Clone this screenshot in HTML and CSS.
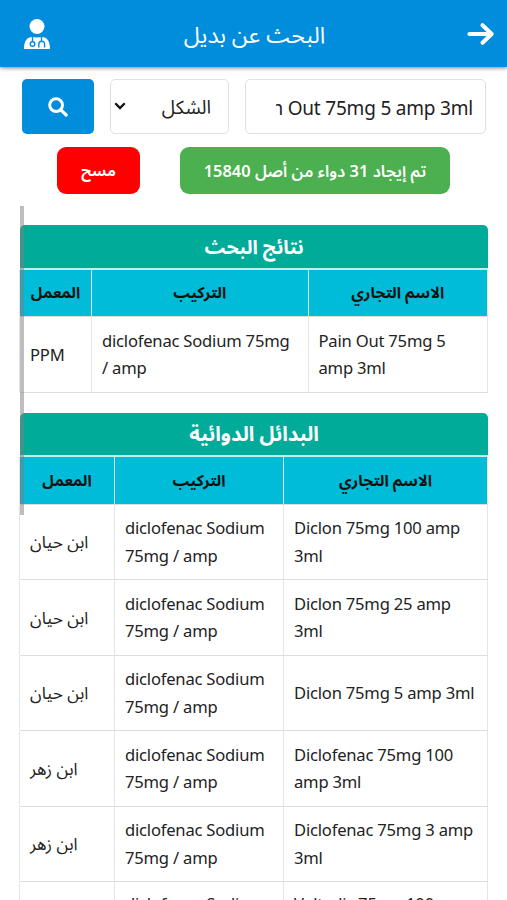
FILE: index.html
```html
<!DOCTYPE html>
<html lang="ar" dir="rtl">
<head>
<meta charset="utf-8">
<title>البحث عن بديل</title>
<link rel="stylesheet" href="styles.css">
</head>
<body>
<header class="topbar">
  <svg class="back" viewBox="0 0 28 24"><path d="M2.4 12H24M15.5 3.2L24.7 12L15.5 20.8" fill="none" stroke="#fff" stroke-width="4" stroke-linecap="round" stroke-linejoin="round"/></svg>
  <h1 class="title">البحث عن بديل</h1>
  <svg class="doctor" viewBox="0 0 26 30"><circle cx="13" cy="7.5" r="7.5" fill="#fff"/><path d="M0 30C0 22 3 18.2 8 18L13 18.5L18 18C23 18.2 26 22 26 30Z" fill="#fff"/><g fill="none" stroke="#008ddc" stroke-width="1.4"><path d="M8.5 18V22.5M17.5 18V22M15.6 27.7H14.8V25.5Q14.8 22.2 17.7 22.2T20.6 25.5V27.7H19.8"/><circle cx="8.5" cy="25" r="2.3"/></g></svg>
</header>
<section class="search">
  <div class="query" dir="ltr"><span class="query-text">Pain Out 75mg 5 amp 3ml</span></div>
  <div class="select"><span>الشكل</span><svg class="chevron" viewBox="0 0 12 8"><path d="M1.3 1.3L6 6L10.7 1.3" fill="none" stroke="#111" stroke-width="2.3"/></svg></div>
  <button class="go" aria-label="بحث"><svg class="lens" viewBox="0 0 20 20"><circle cx="8.1" cy="8.1" r="6.4" fill="none" stroke="#fff" stroke-width="3"/><path d="M12.8 12.8L18.2 18" stroke="#fff" stroke-width="3.2" stroke-linecap="round"/></svg></button>
</section>
<section class="status">
  <div class="count">تم إيجاد 31 دواء من أصل 15840</div>
  <button class="clear">مسح</button>
</section>
<main class="results">
  <div class="thumb"></div>
  <section class="table found">
    <h2 class="caption">نتائج البحث</h2>
    <div class="row head"><div>الاسم التجاري</div><div>التركيب</div><div>المعمل</div></div>
    <div class="row"><div dir="ltr">Pain Out 75mg 5<br>amp 3ml</div><div dir="ltr">diclofenac Sodium 75mg<br>/ amp</div><div dir="ltr">PPM</div></div>
  </section>
  <section class="table alternatives">
    <h2 class="caption">البدائل الدوائية</h2>
    <div class="row head"><div>الاسم التجاري</div><div>التركيب</div><div>المعمل</div></div>
    <div class="row"><div dir="ltr">Diclon 75mg 100 amp<br>3ml</div><div dir="ltr">diclofenac Sodium<br>75mg / amp</div><div class="lab">ابن حيان</div></div>
    <div class="row"><div dir="ltr">Diclon 75mg 25 amp<br>3ml</div><div dir="ltr">diclofenac Sodium<br>75mg / amp</div><div class="lab">ابن حيان</div></div>
    <div class="row"><div dir="ltr">Diclon 75mg 5 amp 3ml</div><div dir="ltr">diclofenac Sodium<br>75mg / amp</div><div class="lab">ابن حيان</div></div>
    <div class="row"><div dir="ltr">Diclofenac 75mg 100<br>amp 3ml</div><div dir="ltr">diclofenac Sodium<br>75mg / amp</div><div class="lab">ابن زهر</div></div>
    <div class="row"><div dir="ltr">Diclofenac 75mg 3 amp<br>3ml</div><div dir="ltr">diclofenac Sodium<br>75mg / amp</div><div class="lab">ابن زهر</div></div>
    <div class="row last"><div dir="ltr">Voltadic 75mg 100<br>amp 3ml</div><div dir="ltr">diclofenac Sodium<br>75mg / amp</div><div></div></div>
  </section>
</main>
</body>
</html>
```
FILE: styles.css
```css
* { box-sizing: border-box; }
html { overflow: hidden; }
body {
  margin: 0;
  height: 900px;
  overflow: hidden;
  background: #fff;
  color: #222;
  font-family: "Noto Sans", "Noto Sans Arabic", "DejaVu Sans", sans-serif;
  font-size: 17px;
}
h1, h2, button { margin: 0; border: 0; padding: 0; font: inherit; }
.topbar {
  height: 67px;
  padding: 0 12px 0 24px;
  display: flex;
  align-items: center;
  justify-content: space-between;
  background: #008ddc;
  box-shadow: 0 1px 4px rgba(0, 0, 0, .5);
  color: #fff;
}
.title { font-size: 23px; padding: 3px 8px 0 0; }
.back { width: 28px; height: 24px; }
.doctor { width: 26px; height: 30px; }
.search {
  display: flex;
  gap: 16px;
  height: 55px;
  margin: 12px 21px 0 22px;
}
.query, .select {
  border: 1px solid #e2e0e0;
  border-radius: 5px;
  display: flex;
  align-items: center;
  color: #222;
  font-size: 19px;
}
.query { width: 241px; padding: 2px 12px 0 30px; }
.query-text { flex: 1; display: flex; justify-content: flex-end; overflow: hidden; white-space: nowrap; letter-spacing: -.2px; }
.select { width: 120px; padding: 2px 17px 0 3px; justify-content: space-between; }
.chevron { width: 12px; height: 8px; margin-bottom: 4px; }
.go {
  width: 72px;
  border-radius: 5px;
  background: #008ddc;
  display: flex;
  align-items: center;
  justify-content: center;
}
.lens { width: 20px; height: 20px; }
.status {
  display: flex;
  gap: 40px;
  height: 47px;
  margin: 13px 57px 0;
  color: #fff;
  font-size: 16.4px;
  font-weight: 600;
}
.count, .clear { display: flex; align-items: center; justify-content: center; border-radius: 9px; white-space: nowrap; padding-top: 2px; }
.count { width: 270px; background: #4caf50; }
.clear { width: 83px; background: #f00; color: #fff; font-size: 14.8px; font-weight: 700; }
.results { position: relative; margin: 12px 19px 0 20px; padding-top: 19px; }
.thumb {
  position: absolute;
  left: 0;
  top: 0;
  width: 4px;
  height: 309px;
  background: rgba(125, 125, 125, .5);
}
.found { margin-bottom: 20px; --cols: 179.5px 216.5px 72px; }
.alternatives { --cols: 204px 169px 95px; }
.caption {
  height: 42.5px;
  display: flex;
  align-items: center;
  justify-content: center;
  border-radius: 5px 5px 0 0;
  background: #00ab9a;
  color: #fff;
  font-size: 20.4px;
  font-weight: 700;
  padding-top: 2px;
}
.found .caption { font-size: 19.4px; padding-top: 3px; }
.row {
  display: grid;
  grid-template-columns: var(--cols);
  height: 75.5px;
  border-bottom: 1px solid #ddd;
  border-right: 1px solid #e4e4e4;
  line-height: 27.5px;
}
.row > div {
  display: flex;
  align-items: center;
  padding: 0 10px;
  border-left: 1px solid #e4e4e4;
  white-space: nowrap;
}
.row > [dir="ltr"] { font-size: 16.6px; letter-spacing: -.21px; }
.row.last > [dir="ltr"] { align-items: flex-start; padding-top: 8px; }
.row > .lab { justify-content: flex-end; }
.row.head { height: 49.5px; border-top: 2px solid #c7eeea; background: #00bcd8; color: #111; font-size: 15.6px; font-weight: 700; }
.row.head > div { justify-content: center; padding: 0; }
```
